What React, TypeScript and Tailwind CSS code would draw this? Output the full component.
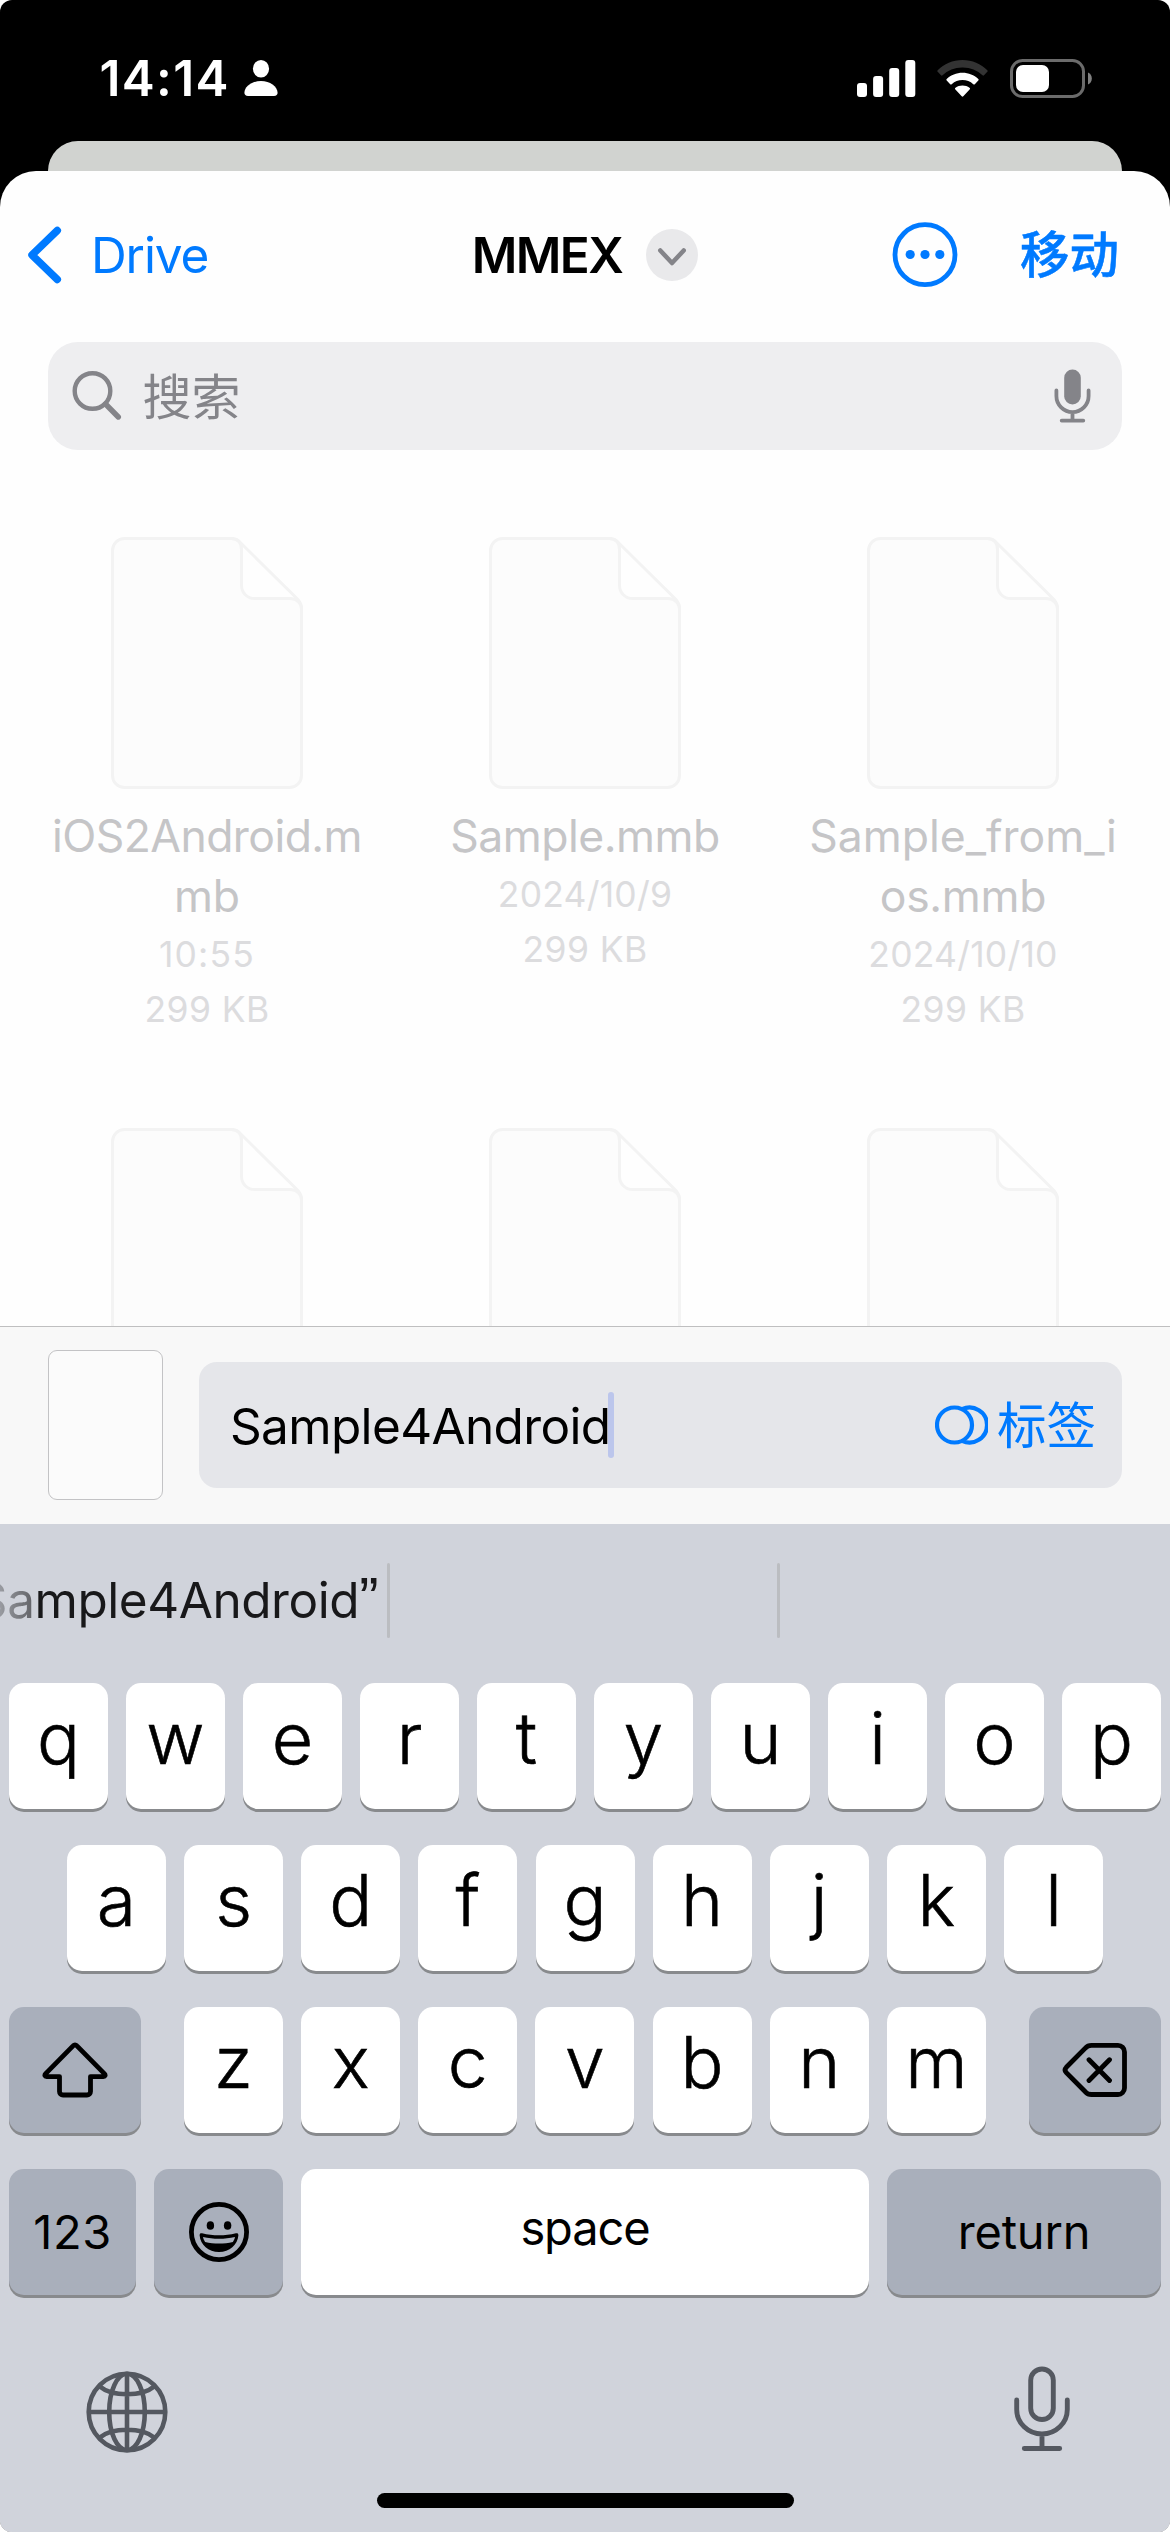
import type { ReactNode } from "react";

type FileEntry = {
  lines: { text: string; tracking: string }[];
  meta: { text: string; tracking: string }[];
};

const size = { text: "299 KB", tracking: "tracking-[0.4px]" };

const files: FileEntry[] = [
  {
    lines: [
      { text: "iOS2Android.m", tracking: "tracking-[-0.55px]" },
      { text: "mb", tracking: "" },
    ],
    meta: [{ text: "10:55", tracking: "tracking-[1.2px]" }, size],
  },
  {
    lines: [{ text: "Sample.mmb", tracking: "tracking-[-0.5px]" }],
    meta: [{ text: "2024/10/9", tracking: "tracking-[0.2px]" }, size],
  },
  {
    lines: [
      { text: "Sample_from_i", tracking: "" },
      { text: "os.mmb", tracking: "tracking-[-0.3px]" },
    ],
    meta: [{ text: "2024/10/10", tracking: "tracking-[0.2px]" }, size],
  },
  { lines: [], meta: [] },
  { lines: [], meta: [] },
  { lines: [], meta: [] },
];

function StatusBar() {
  return (
    <div className="flex h-[141px] items-center pt-[15px] pr-[78px] pl-[99.5px] text-white">
      <span className="text-[49.5px] leading-[60px] font-semibold tracking-[1.35px]">14:14</span>
      <svg className="ml-[14.5px] h-9 w-[34px]" viewBox="0 0 34 36" fill="currentColor">
        <ellipse cx="17" cy="8.8" rx="8.1" ry="8.8" />
        <path d="M4 36C1.6 36 .4 34.800.4 32.800C.6 26.500 8 21 17 21s16.400 5.500 16.600 11.800C33.600 34.800 32.400 36 30 36z" />
      </svg>
      <div className="ml-auto flex items-center">
        <svg className="h-[37px] w-[59px]" viewBox="0 0 59 37" fill="currentColor">
          <rect x="0" y="23" width="10" height="14" rx="3" />
          <rect x="16.100" y="16" width="10" height="21" rx="3" />
          <rect x="32.200" y="8" width="10" height="29" rx="3" />
          <rect x="48.300" y="0" width="10" height="37" rx="3" />
        </svg>
        <svg className="ml-[21px] h-[37px] w-[51px]" viewBox="0 0 51 37" fill="currentColor">
          <path fill="#333333" d="M25.500 0C35.200 0 44 3.800 50.300 10.200a1 1 0 0 1 0 1.500L47 15.300a1 1 0 0 1-1.500 0A28.500 28.500 0 0 0 25.500 7.500A28.500 28.500 0 0 0 5.500 15.300a1 1 0 0 1-1.500 0L.7 11.700a1 1 0 0 1 0-1.500C7 3.800 15.800 0 25.500 0z" />
          <path d="M25.500 12.700c6.100 0 11.600 2.300 15.800 6.200a1.100 1.100 0 0 1 0 1.600l-3.500 3.700a1.100 1.100 0 0 1-1.500 0a16 16 0 0 0-21.600 0a1.100 1.100 0 0 1-1.500 0l-3.500-3.700a1.100 1.100 0 0 1 0-1.600c4.200-3.900 9.700-6.200 15.800-6.200z" />
          <path d="M25.500 25.400c2.700 0 5.100.9 7 2.300a1.100 1.100 0 0 1 .1 1.700l-6.300 6.900a1.100 1.100 0 0 1-1.600 0l-6.300-6.900a1.100 1.100 0 0 1 .1-1.700c1.900-1.400 4.300-2.300 7-2.300z" />
        </svg>
        <svg className="ml-[22px] h-[39px] w-[82px]" viewBox="0 0 82 39">
          <rect x="1.500" y="1.500" width="72" height="36" rx="11" fill="none" stroke="#6b6b6b" strokeWidth="3" />
          <rect x="6" y="6" width="33" height="27" rx="7" fill="#fff" />
          <path d="M78 13.500c2.400 1 3.800 3.300 3.800 6s-1.400 5-3.800 6z" fill="#808080" />
        </svg>
      </div>
    </div>
  );
}

function NavBar() {
  return (
    <div className="grid h-[168px] grid-cols-[1fr_auto_1fr] items-center">
      <div className="flex items-center text-[#007AFF]">
        <svg className="ml-7 h-[58px] w-[34px]" viewBox="0 0 34 58" fill="none" stroke="currentColor" strokeWidth="7.5" strokeLinecap="round" strokeLinejoin="round">
          <path d="M29.300 4.500L4 29L29.300 53.500" />
        </svg>
        <span className="ml-[29px] text-[49.5px] leading-[60px] tracking-[-1.1px]">Drive</span>
      </div>
      <div className="flex items-center">
        <h1 className="text-[49.5px] leading-[60px] font-semibold tracking-[-1.6px]">MMEX</h1>
        <svg className="ml-[24px] size-[52px]" viewBox="0 0 52 52" fill="none">
          <circle cx="26" cy="26" r="26" fill="#E9E9EB" />
          <path d="M14.300 21.500L26 34L37.700 21.500" stroke="#848489" strokeWidth="4.500" strokeLinecap="round" strokeLinejoin="round" />
        </svg>
      </div>
      <div className="flex items-center justify-end pr-[51px] text-[#007AFF]">
        <svg className="size-[66px]" viewBox="0 0 66 66" fill="currentColor">
          <circle cx="33" cy="32.700" r="30" fill="none" stroke="currentColor" strokeWidth="4.800" />
          <circle cx="18.200" cy="32.500" r="4.600" />
          <circle cx="33" cy="32.500" r="4.600" />
          <circle cx="47.800" cy="32.500" r="4.600" />
        </svg>
        <span className="ml-[62px] text-[49.500px] leading-[60px] font-medium whitespace-nowrap [-webkit-text-stroke:0.5px_currentColor]">移动</span>
      </div>
    </div>
  );
}

function SearchBar() {
  return (
    <div className="mx-12 mt-[3px] flex h-[108px] items-center rounded-[30px] bg-[#EEEEF0] pr-[31.500px] pl-[23.500px] text-[#848489]">
      <svg className="h-[50px] w-[50px]" viewBox="0 0 50 50" fill="none" stroke="currentColor" strokeLinecap="round">
        <circle cx="20.500" cy="20" r="17.800" strokeWidth="4.400" />
        <path d="M33.500 33L46.300 46" strokeWidth="5.400" />
      </svg>
      <span className="ml-[21px] pt-1 text-[49px] leading-[60px]">搜索</span>
      <svg className="ml-auto h-[54px] w-[37px]" viewBox="0 0 37 54" fill="none" stroke="currentColor" strokeWidth="3.800" strokeLinecap="round">
        <rect x="10.200" y="0.500" width="16.600" height="35" rx="8.300" fill="currentColor" stroke="none" />
        <path d="M2.400 21.500v5.500a16.100 16.100 0 0 0 32.200 0v-5.500M18.500 43.500v8M7.700 51.600h21.600" />
      </svg>
    </div>
  );
}

function FileIcon() {
  return (
    <svg className="h-[252px] w-[192px]" viewBox="0 0 192 252" fill="none">
      <path d="M12 1.500H120c4 0 6.500 1.200 9.500 4.200L186.500 62c3 3 4 5.500 4 9.500V238.500a12 12 0 0 1-12 12H13.500a12 12 0 0 1-12-12V13.500a12 12 0 0 1 12-12z" fill="#FCFCFC" />
      <path d="M130.500 6L186 61.500H144a13 13 0 0 1-13-13z" fill="#FEFEFE" />
      <path d="M13.500 1.500H120c4 0 6.500 1.200 9.500 4.200L186.500 62c3 3 4 5.500 4 9.500V238.500a12 12 0 0 1-12 12H13.500a12 12 0 0 1-12-12V13.500a12 12 0 0 1 12-12z" stroke="#F3F3F3" strokeWidth="3" />
      <path d="M120 1.500c7 0 10.500 4 10.500 11V48.500a13 13 0 0 0 13 13H179c7 0 11.500 4.500 11.500 11" stroke="#F3F3F3" strokeWidth="3" />
    </svg>
  );
}

function FileGrid() {
  return (
    <div className="grid h-[876px] auto-rows-[591px] grid-cols-3 overflow-hidden px-[18px] pt-[87px]">
      {files.map((file, i) => (
        <div key={i} className="flex flex-col items-center">
          <FileIcon />
          <div className="mt-[17px] text-center text-[44.500px] leading-[60px] text-[#C5C5C7]">
            {file.lines.map((l) => (
              <p key={l.text} className={l.tracking}>{l.text}</p>
            ))}
          </div>
          <div className="mt-px text-center text-[35.500px] leading-[55px] text-[#DCDCDE]">
            {file.meta.map((m) => (
              <p key={m.text} className={m.tracking}>{m.text}</p>
            ))}
          </div>
        </div>
      ))}
    </div>
  );
}

function NameBar() {
  return (
    <div className="flex h-[198px] items-center border-t border-[#BFBFC0] bg-[#F8F8F8] pr-12 pb-[2px] pl-12">
      <div className="h-[150px] w-[115px] rounded-[9px] border border-[#C3C3C5] bg-[#FBFBFB]" />
      <div className="ml-9 flex h-[126px] flex-1 items-center rounded-[18px] bg-[#E5E6EA] pr-[26px] pl-[31px]">
        <span className="pt-[2px] text-[49.500px] leading-[60px] tracking-[-0.65px] text-black">Sample4Android</span>
        <span className="relative -left-[2px] h-[66px] w-[6px] rounded-full bg-[#BCC6EC]" />
        <svg className="ml-auto h-[40px] w-[53px]" viewBox="0 0 53 40" fill="none" stroke="#007AFF" strokeWidth="4.200">
          <circle cx="19.500" cy="20" r="17.500" />
          <path d="M27 4.200A17.500 17.500 0 1 1 27 35.800" />
        </svg>
        <span className="ml-[9px] pt-[2px] text-[49.500px] leading-[60px] text-[#007AFF]">标签</span>
      </div>
    </div>
  );
}

function Key({ children, className }: { children: ReactNode; className: string }) {
  return (
    <div className={"flex h-[126px] items-center justify-center rounded-[15px] text-black shadow-[0_3px_0_#888A8D] " + className}>
      {children}
    </div>
  );
}

function Letters({ keys }: { keys: string }) {
  return keys.split("").map((k) => (
    <Key key={k} className="w-[99px] bg-white pb-4 text-[71.500px] leading-[100px] font-light [-webkit-text-stroke:0.6px_#000]">
      {k}
    </Key>
  ));
}

function Keyboard() {
  return (
    <div className="flex h-[1008px] flex-col bg-[#D0D3DB]">
      <div className="flex h-[159px] pt-[39px]">
        <div className="flex h-[75px] w-[387px] justify-end overflow-hidden pr-[9px] [mask-image:linear-gradient(to_right,rgba(0,0,0,0.3)_0px,rgba(0,0,0,0.58)_31px,#000_34px)]">
          <span className="text-[49.500px] leading-[75px] tracking-[-0.45px] whitespace-nowrap text-[#18181A]">
            “Sample4Android<span className="font-['Liberation_Sans'] text-[58px] leading-[0]">”</span>
          </span>
        </div>
        <div className="h-[75px] w-[3px] rounded-full bg-[#BBBDC1]" />
        <div className="w-[387px]" />
        <div className="h-[75px] w-[3px] rounded-full bg-[#BBBDC1]" />
      </div>
      <div className="flex flex-col gap-9">
        <div className="flex justify-between px-[9px]">
          <Letters keys="qwertyuiop" />
        </div>
        <div className="flex justify-between px-[67px]">
          <Letters keys="asdfghjkl" />
        </div>
        <div className="flex justify-between px-[9px]">
          <Key className="w-[132px] bg-[#A9AFBB]">
            <svg className="h-[56px] w-[66px]" viewBox="0 0 66 56" fill="none" stroke="currentColor" strokeWidth="4.800" strokeLinejoin="round">
              <path d="M31.300 3.600a2.300 2.300 0 0 1 3.400 0L62.300 31.600c1.500 1.600.8 3-.9 3H48.500V49.500a3.500 3.500 0 0 1-3.500 3.500H21a3.500 3.500 0 0 1-3.500-3.500V34.600H4.600c-1.700 0-2.400-1.400-.9-3z" />
            </svg>
          </Key>
          <div className="flex w-[802px] justify-between">
            <Letters keys="zxcvbnm" />
          </div>
          <Key className="w-[132px] bg-[#A9AFBB]">
            <svg className="h-[54px] w-[66px]" viewBox="0 0 66 54" fill="none" stroke="currentColor" strokeWidth="4.800" strokeLinecap="round" strokeLinejoin="round">
              <path d="M29.500 2.400H56a6.500 6.500 0 0 1 6.500 6.500V45a6.500 6.500 0 0 1-6.500 6.500H29.500c-2.500 0-4.500-.8-6.200-2.700L4.300 29.600c-1.600-1.700-1.600-3.600 0-5.300L23.300 5.100c1.700-1.900 3.700-2.700 6.200-2.700zM27 16.800L47.500 37.500M47.500 16.800L27 37.500" />
            </svg>
          </Key>
        </div>
        <div className="flex gap-[18px] px-[9px]">
          <Key className="w-[127px] bg-[#A9AFBB] text-[47px] leading-[60px] tracking-[0.600px]">123</Key>
          <Key className="w-[129px] bg-[#A9AFBB]">
            <svg className="size-[60px]" viewBox="0 0 60 60">
              <circle cx="30" cy="30" r="27.600" fill="none" stroke="currentColor" strokeWidth="4.800" />
              <ellipse cx="21.400" cy="23.500" rx="3.700" ry="4.300" />
              <ellipse cx="38.600" cy="23.500" rx="3.700" ry="4.300" />
              <path d="M10.600 33.200c0-1.700 1-2.300 2.500-1.900 11 2.700 22.800 2.700 33.800 0 1.500-.4 2.500.2 2.500 1.900C48.600 43 40.500 50 30 50S11.400 43 10.600 33.200z" />
              <path d="M14 35c10.500 2.400 21.500 2.400 32 0-.4 2-1.200 3.600-2.100 4.900-9 2.200-18.800 2.200-27.800 0-.9-1.300-1.700-2.900-2.100-4.900z" fill="#A9AFBB" />
            </svg>
          </Key>
          <Key className="w-[568px] bg-white pb-2 text-[47px] leading-[60px] tracking-[-1.100px]">space</Key>
          <Key className="w-[274px] bg-[#A9AFBB] text-[47px] leading-[60px] tracking-[-0.200px]">return</Key>
        </div>
      </div>
      <div className="flex items-start justify-between pt-[71px] pr-[98px] pl-[86px] text-[#545860]">
        <svg className="mt-[5px] size-[82px]" viewBox="0 0 82 82" fill="none" stroke="currentColor" strokeWidth="4.600">
          <circle cx="41" cy="41" r="38.300" />
          <ellipse cx="41" cy="41" rx="17.800" ry="38.300" />
          <path d="M41 2.700v76.600M2.700 41h76.600M13.800 15.500C20 20.700 30 23.300 41 23.300s21-2.600 27.200-7.800M13.800 66.500C20 61.300 30 58.700 41 58.700s21 2.600 27.200 7.800" />
        </svg>
        <svg className="h-[86px] w-[60px]" viewBox="0 0 60 86" fill="none" stroke="currentColor" strokeWidth="4.900" strokeLinecap="round">
          <rect x="18.700" y="3" width="22.600" height="50.500" rx="11.300" />
          <path d="M4.700 34v9.500a25.300 24.500 0 0 0 50.600 0V34M30 68.500v14M12.300 82.500h35.400" />
        </svg>
      </div>
      <div className="mt-auto mb-6 ml-px h-[15px] w-[417px] self-center rounded-full bg-black" />
    </div>
  );
}

export default function App() {
  return (
    <div className="h-[2532px] w-[1170px] bg-white">
      <div className="flex h-full flex-col overflow-hidden rounded-[12px] bg-black font-[Inter,'Noto_Sans_CJK_SC',sans-serif]">
        <StatusBar />
        <div className="mx-12 -mb-10 h-[70px] shrink-0 rounded-t-[30px] bg-[#D1D3D0]" />
        <div className="relative flex flex-1 flex-col rounded-t-[36px] bg-[#FEFEFE]">
          <NavBar />
          <SearchBar />
          <FileGrid />
          <NameBar />
          <Keyboard />
        </div>
      </div>
    </div>
  );
}
